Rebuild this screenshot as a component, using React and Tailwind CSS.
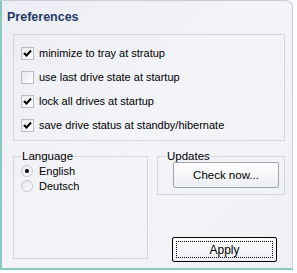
const OPTIONS = [
  { label: 'minimize to tray at stratup', checked: true },
  { label: 'use last drive state at startup', checked: false },
  { label: 'lock all drives at startup', checked: true },
  { label: 'save drive status at standby/hibernate', checked: true },
]

function Checkbox({ checked }) {
  return (
    <span className="w-[13px] h-[13px] border border-[#b9bdc6] bg-gradient-to-br from-[#e6e8ee] to-white flex items-center justify-center shrink-0">
      {checked && (
        <svg width="9" height="9" viewBox="0 0 9 9">
          <path d="M1 4 L3.5 6.5 L8 1.5" fill="none" stroke="#000" strokeWidth="2" />
        </svg>
      )}
    </span>
  )
}

function Radio({ checked }) {
  return (
    <span className="w-[12px] h-[12px] rounded-full border border-[#c4c8d0] bg-gradient-to-br from-[#e4e6ec] to-white flex items-center justify-center shrink-0">
      {checked && <span className="w-[4px] h-[4px] rounded-full bg-black" />}
    </span>
  )
}

function Group({ title, className, legendClass, children }) {
  return (
    <fieldset className={`border border-[#d3d6dd] ${className}`}>
      <legend className={`px-[1px] text-black leading-[12px] text-[11.5px] ${legendClass}`}>{title}</legend>
      {children}
    </fieldset>
  )
}

export default function App() {
  return (
    <div className="w-[297px] h-[273px] bg-white font-['Liberation_Sans',sans-serif] text-[11px] text-black">
      <div className="w-[293px] h-[270px] bg-gradient-to-br from-[#eceef3] via-[#f3f4f8] to-[#eff1f5] border-l-[2px] border-b-[2px] border-l-[#86cbbf] border-b-[#86cbbf] border-t border-r border-t-[#c8ccd4] border-r-[#c8ccd4] rounded-tr-[7px] flex flex-col">
        <div className="h-[33px] pl-[5px] pt-[8px] text-[12.5px] font-bold text-[#1f3a6a] leading-[16px]">Preferences</div>

        <div className="ml-[11px] mr-[7px] h-[107px] border border-[#d3d6dd] flex flex-col pl-[7px] pt-[12px] gap-[11px]">
          {OPTIONS.map(o => (
            <div key={o.label} className="flex items-center gap-[5px] h-[13px]">
              <Checkbox checked={o.checked} />
              <span className="leading-[13px]">{o.label}</span>
            </div>
          ))}
        </div>

        <div className="flex ml-[11px] mt-[9px] gap-[9px]">
          <Group title="Language" className="w-[135px] h-[109px] pl-[7px]" legendClass="ml-0">
            <div className="flex flex-col gap-[3px] pt-[3px]">
              <div className="flex items-center gap-[6px] h-[12px]">
                <Radio checked />
                <span>English</span>
              </div>
              <div className="flex items-center gap-[6px] h-[12px]">
                <Radio />
                <span>Deutsch</span>
              </div>
            </div>
          </Group>

          <div className="flex flex-col">
            <Group title="Updates" className="w-[128px] h-[45px] pl-[15px]" legendClass="-ml-[7px]">
              <button className="w-[106px] h-[26px] border border-[#9fa5b0] rounded-[2px] bg-gradient-to-b from-white to-[#eceef2] leading-[24px] text-[11.5px]">
                Check now...
              </button>
            </Group>
            <div className="mt-[42px] ml-[15px] w-[105px] h-[25px] border border-black rounded-[2px] bg-gradient-to-b from-white to-[#eceef2] p-[3px]">
              <div className="w-full h-full border border-dotted border-black flex items-center justify-center text-[12px]">Apply</div>
            </div>
          </div>
        </div>
      </div>
    </div>
  )
}
